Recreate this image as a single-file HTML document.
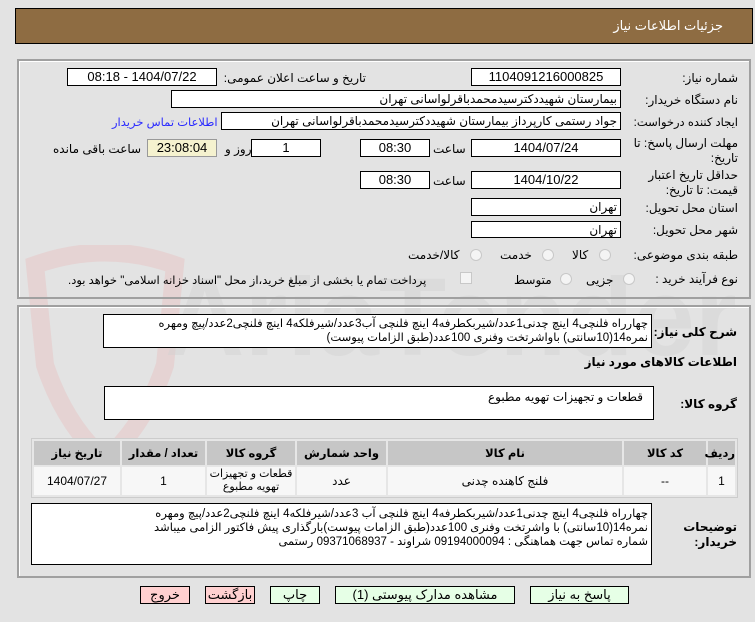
<!DOCTYPE html>
<html dir="rtl"><head><meta charset="utf-8"><style>
*{box-sizing:border-box;margin:0;padding:0}
body{width:755px;height:622px;background:#e3e3e3;font-family:"Liberation Sans","DejaVu Sans",sans-serif;font-size:12px;color:#000;position:relative;overflow:hidden}
.a{position:absolute;white-space:nowrap}
.box{position:absolute;background:#fff;border:1px solid #000;text-align:center;line-height:16px;font-size:13px;overflow:hidden;white-space:nowrap}
.l{position:absolute;white-space:nowrap;font-size:12px}
.r{text-align:right;padding-right:3px}
.panel{position:absolute;border:2px solid #a0a0a0;box-shadow:inset 1px 1px 0 #fff}
.rad{position:absolute;width:12px;height:12px;border-radius:50%;border:1px solid #c8c8c8;background:#f4f4f4}
.btn{position:absolute;height:18px;border:1px solid #000;background:#e6ffe6;text-align:center;line-height:16px;font-size:13px}
.pk{background:#ffd0d0}
table{position:absolute;left:31px;top:438px;width:707px;border-collapse:separate;border-spacing:2px;background:#e6e6e6;border:1px solid #ccc;table-layout:fixed}
th{background:#c6c6c6;height:24px;font-weight:bold;font-size:11.5px}
td{background:#f7f7f7;height:28px;text-align:center;font-size:12px;line-height:13px}
.ml{text-align:right;line-height:14px;font-size:11.5px;padding:2px 3px 0 0}
</style></head><body>
<svg class="a" style="left:15px;top:245px" width="720" height="230">
<path d="M20 20 Q90 -5 160 20 L150 120 Q130 180 90 215 Q50 180 30 120 Z" fill="none" stroke="#e8c4c4" stroke-width="18" opacity=".5"/>
<text x="150" y="110" font-family="Liberation Sans" font-weight="bold" font-size="110" fill="#d2d2d2" opacity=".45" direction="ltr">AriaTender.net</text>
</svg>
<div class="a" style="left:15px;top:8px;width:738px;height:36px;background:#8e6c42;border:1px solid #000"></div>
<div class="a" style="right:32px;top:18px;color:#fff;font-size:13px">جزئیات اطلاعات نیاز</div>

<div class="panel" style="left:17px;top:59px;width:734px;height:240px"></div>
<div class="panel" style="left:17px;top:305px;width:734px;height:273px"></div>

<div class="l" style="right:17px;top:71px">شماره نیاز:</div>
<div class="box" style="left:471px;top:68px;width:150px;height:18px">1104091216000825</div>
<div class="l" style="right:389px;top:71px">تاریخ و ساعت اعلان عمومی:</div>
<div class="box" style="left:67px;top:68px;width:150px;height:18px">1404/07/22 - 08:18</div>

<div class="l" style="right:17px;top:93px">نام دستگاه خریدار:</div>
<div class="box r" style="left:171px;top:90px;width:450px;height:18px;font-size:12px">بیمارستان شهیددکترسیدمحمدباقرلواسانی تهران</div>

<div class="l" style="right:17px;top:115px;font-size:11.5px">ایجاد کننده درخواست:</div>
<div class="box r" style="left:221px;top:112px;width:400px;height:18px;font-size:12px">جواد رستمی کارپرداز بیمارستان شهیددکترسیدمحمدباقرلواسانی تهران</div>
<div class="l" style="left:112px;top:115px;color:#2a2aff;font-size:11.5px">اطلاعات تماس خریدار</div>

<div class="l" style="right:17px;top:136px;line-height:15px;white-space:normal;width:110px;text-align:right">مهلت ارسال پاسخ: تا تاریخ:</div>
<div class="box" style="left:471px;top:139px;width:150px;height:18px">1404/07/24</div>
<div class="l" style="left:433px;top:142px">ساعت</div>
<div class="box" style="left:360px;top:139px;width:70px;height:18px">08:30</div>
<div class="box" style="left:251px;top:139px;width:70px;height:18px">1</div>
<div class="l" style="left:225px;top:142px">روز و</div>
<div class="box" style="left:147px;top:139px;width:70px;height:18px;background:#f5f2cf;border-color:#999">23:08:04</div>
<div class="l" style="left:53px;top:142px">ساعت باقی مانده</div>

<div class="l" style="right:17px;top:168px;line-height:15px;white-space:normal;width:110px;text-align:right">حداقل تاریخ اعتبار قیمت: تا تاریخ:</div>
<div class="box" style="left:471px;top:171px;width:150px;height:18px">1404/10/22</div>
<div class="l" style="left:433px;top:174px">ساعت</div>
<div class="box" style="left:360px;top:171px;width:70px;height:18px">08:30</div>

<div class="l" style="right:17px;top:201px">استان محل تحویل:</div>
<div class="box r" style="left:471px;top:198px;width:150px;height:18px;font-size:12px">تهران</div>
<div class="l" style="right:17px;top:223px">شهر محل تحویل:</div>
<div class="box r" style="left:471px;top:221px;width:150px;height:17px;font-size:12px">تهران</div>

<div class="l" style="right:17px;top:248px">طبقه بندی موضوعی:</div>
<div class="rad" style="left:599px;top:249px"></div><div class="l" style="left:572px;top:248px">کالا</div>
<div class="rad" style="left:542px;top:249px"></div><div class="l" style="left:500px;top:248px">خدمت</div>
<div class="rad" style="left:470px;top:249px"></div><div class="l" style="left:408px;top:248px">کالا/خدمت</div>

<div class="l" style="right:17px;top:272px">نوع فرآیند خرید :</div>
<div class="rad" style="left:623px;top:273px"></div><div class="l" style="left:586px;top:273px">جزیی</div>
<div class="rad" style="left:560px;top:273px"></div><div class="l" style="left:514px;top:273px">متوسط</div>
<div class="a" style="left:460px;top:272px;width:12px;height:12px;border:1px solid #c8c8c8;background:#f4f4f4"></div>
<div class="l" style="left:68px;top:273px;font-size:11.5px">پرداخت تمام یا بخشی از مبلغ خرید،از محل "اسناد خزانه اسلامی" خواهد بود.</div>

<div class="l" style="right:18px;top:325px;font-weight:bold">شرح کلی نیاز:</div>
<div class="box ml" style="left:103px;top:314px;width:549px;height:34px">چهارراه فلنچی4 اینچ چدنی1عدد/شیربکطرفه4 اینچ فلنچی آب3عدد/شیرفلکه4 اینچ فلنچی2عدد/پیچ ومهره<br>نمره14(10سانتی) باواشرتخت وفنری 100عدد(طبق الزامات پیوست)</div>
<div class="l" style="right:18px;top:355px;font-weight:bold">اطلاعات کالاهای مورد نیاز</div>
<div class="l" style="right:18px;top:397px;font-weight:bold">گروه کالا:</div>
<div class="box" style="left:104px;top:386px;width:550px;height:34px;text-align:right;padding-right:10px;padding-top:2px;font-size:12px">قطعات و تجهیزات تهویه مطبوع</div>

<table>
<tr><th style="width:27px">ردیف</th><th style="width:82px">کد کالا</th><th style="width:234px">نام کالا</th><th style="width:89px">واحد شمارش</th><th style="width:88px">گروه کالا</th><th style="width:83px">تعداد / مقدار</th><th>تاریخ نیاز</th></tr>
<tr><td>1</td><td>--</td><td>فلنج کاهنده چدنی</td><td>عدد</td><td style="font-size:11px">قطعات و تجهیزات<br>تهویه مطبوع</td><td>1</td><td>1404/07/27</td></tr>
</table>

<div class="l" style="right:18px;top:520px;font-weight:bold;line-height:15px;white-space:normal;width:60px;text-align:right">توضیحات خریدار:</div>
<div class="box ml" style="left:31px;top:503px;width:621px;height:62px;padding-top:3px">چهارراه فلنچی4 اینچ چدنی1عدد/شیربکطرفه4 اینچ فلنچی آب 3عدد/شیرفلکه4 اینچ فلنچی2عدد/پیچ ومهره<br>نمره14(10سانتی) با واشرتخت وفنری 100عدد(طبق الزامات پیوست)بارگذاری پیش فاکتور الزامی میباشد<br>شماره تماس جهت هماهنگی : 09194000094 شراوند - 09371068937 رستمی</div>

<div class="btn" style="left:530px;top:586px;width:99px">پاسخ به نیاز</div>
<div class="btn" style="left:335px;top:586px;width:180px">مشاهده مدارک پیوستی (1)</div>
<div class="btn" style="left:270px;top:586px;width:50px">چاپ</div>
<div class="btn pk" style="left:205px;top:586px;width:50px">بازگشت</div>
<div class="btn pk" style="left:140px;top:586px;width:50px">خروج</div>
</body></html>
